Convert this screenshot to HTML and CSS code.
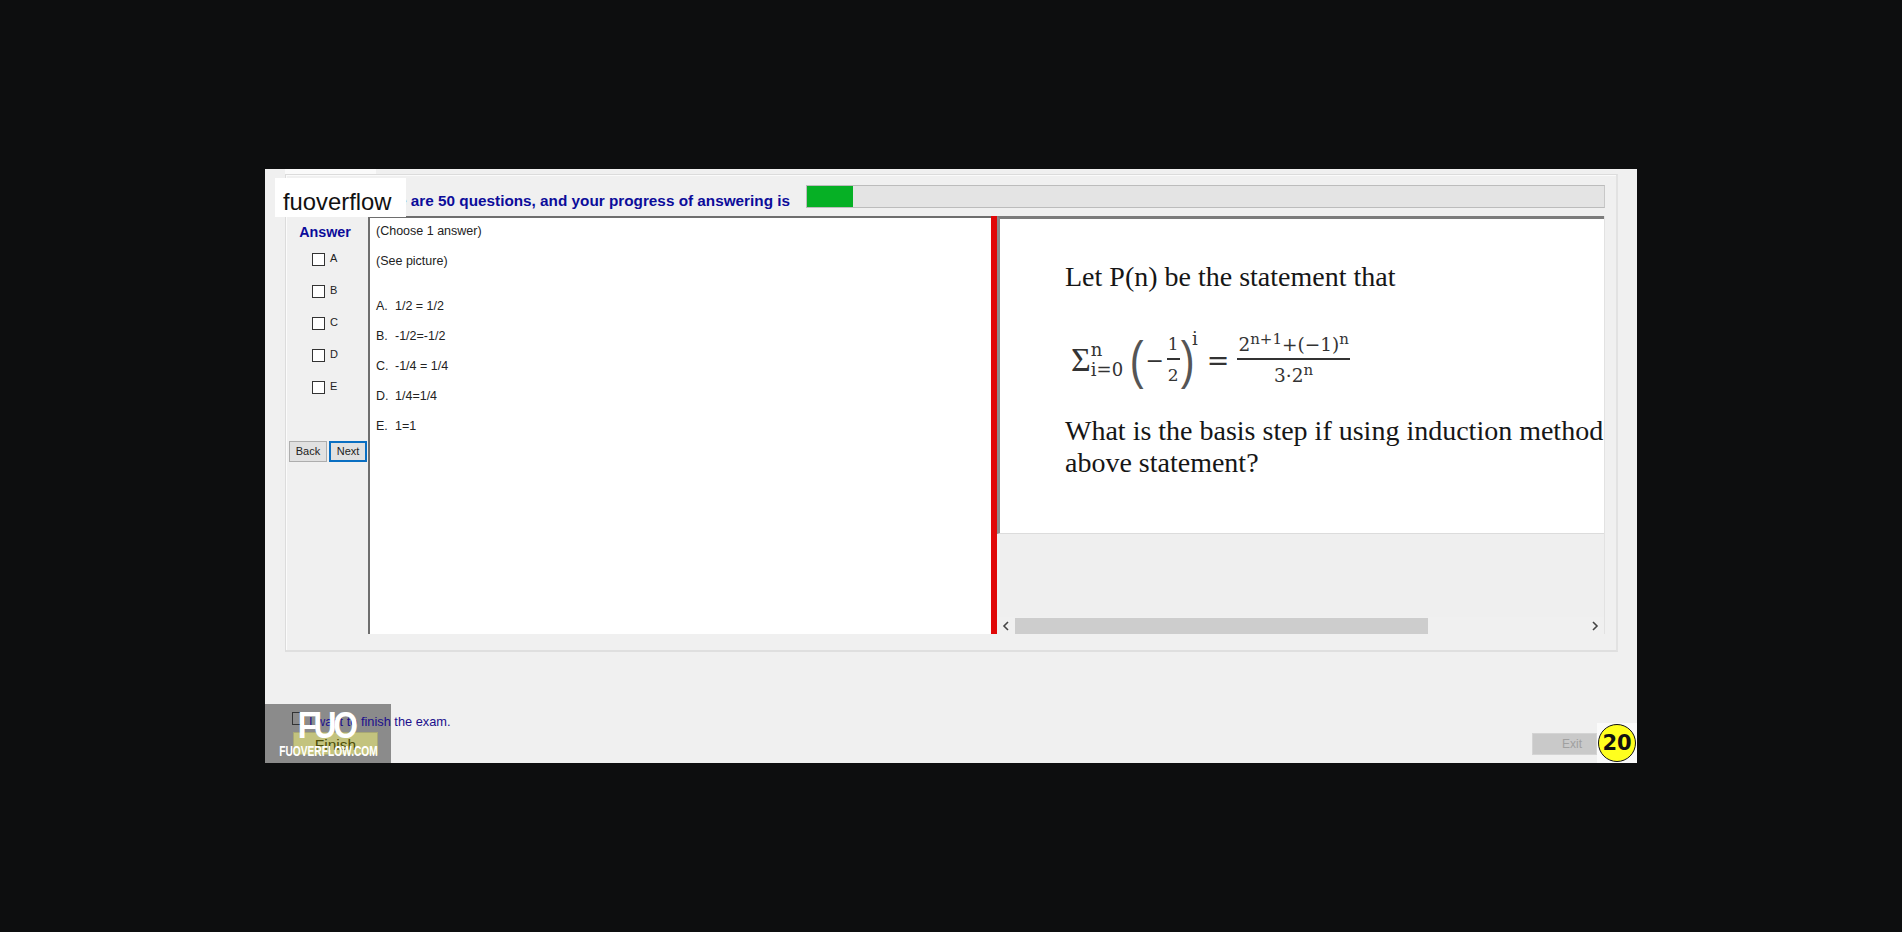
FILE: index.html
```html
<!DOCTYPE html>
<html lang="en">
<head>
<meta charset="utf-8">
<title>Exam</title>
<link rel="stylesheet" href="styles.css">
</head>
<body>
<div class="window">
  <div class="tabstrip"><div class="tab"></div></div>
  <div class="group">
    <div class="progress-row">
      <span class="progress-text">There are 50 questions, and your progress of answering is</span>
      <div class="progress"><div class="progress-fill"></div></div>
    </div>
    <div class="main">
      <aside class="answers">
        <div class="answers-title">Answer</div>
        <label class="opt"><span class="box"></span><span>A</span></label>
        <label class="opt"><span class="box"></span><span>B</span></label>
        <label class="opt"><span class="box"></span><span>C</span></label>
        <label class="opt"><span class="box"></span><span>D</span></label>
        <label class="opt"><span class="box"></span><span>E</span></label>
        <div class="nav">
          <span class="btn">Back</span>
          <span class="btn btn-focus">Next</span>
        </div>
      </aside>
      <section class="question">
        <p class="q-line">(Choose 1 answer)</p>
        <p class="q-line">(See picture)</p>
        <p class="q-line q-gap"><span class="q-let">A.</span>1/2 = 1/2</p>
        <p class="q-line"><span class="q-let">B.</span>-1/2=-1/2</p>
        <p class="q-line"><span class="q-let">C.</span>-1/4 = 1/4</p>
        <p class="q-line"><span class="q-let">D.</span>1/4=1/4</p>
        <p class="q-line"><span class="q-let">E.</span>1=1</p>
      </section>
      <div class="splitter"></div>
      <section class="viewer">
        <div class="viewport">
          <div class="picture">
            <p class="pic-line">Let P(n) be the statement that</p>
            <div class="eq">
              <span class="sigma">Σ</span>
              <span class="limits"><span>n</span><span>i=0</span></span>
              <span class="paren">(</span>
              <span class="minus">−</span>
              <span class="frac small"><span class="num">1</span><span class="den">2</span></span>
              <span class="paren paren-close">)</span>
              <span class="exp">i</span>
              <span class="equals">=</span>
              <span class="frac"><span class="num">2<sup>n+1</sup>+(−1)<sup>n</sup></span><span class="den">3·2<sup>n</sup></span></span>
            </div>
            <p class="pic-para">What is the basis step if using induction method to prove the above statement?</p>
          </div>
        </div>
        <div class="scrollbar">
          <span class="arrow"><svg class="chev" viewBox="0 0 8 10"><polyline points="6,1 2,5 6,9"/></svg></span>
          <div class="track"><div class="thumb"></div></div>
          <span class="arrow"><svg class="chev" viewBox="0 0 8 10"><polyline points="2,1 6,5 2,9"/></svg></span>
        </div>
      </section>
    </div>
  </div>
  <div class="footer">
    <div class="finish-col">
      <label class="finish-check"><span class="box"></span><span class="finish-label">I want to finish the exam.</span></label>
      <span class="finish-btn">Finish</span>
    </div>
    <span class="exit-btn">Exit</span>
  </div>
  <div class="wm-label">fuoverflow</div>
  <div class="wm-back"></div>
  <div class="wm-logo"><span class="wm-fuo">FUO</span><span class="wm-site">FUOVERFLOW.COM</span></div>
  <div class="timer"><span class="timer-dot">20</span></div>
</div>
</body>
</html>
```
FILE: styles.css
```css
html, body { margin: 0; height: 100%; background: #0d0e0f; overflow: hidden; }
body { display: flex; justify-content: flex-start; font-family: "Liberation Sans", Arial, sans-serif; }
p { margin: 0; }
.window { position: relative; width: 1372px; height: 594px; margin: 169px 0 0 265px; background: #f0f0f0; display: flex; flex-direction: column; }
.tabstrip { height: 5px; padding-left: 20px; }
.tab { width: 91px; height: 5px; background: #fafafa; }
.group { width: 1333px; height: 478px; margin-left: 20px; box-sizing: border-box; border: 1px solid #dcdcdc; border-bottom: 2px solid #dfdfdf; border-right: 2px solid #e2e2e2; box-shadow: inset 1px 1px 0 #fbfbfb; padding: 10px 0 0; }
.progress-row { display: flex; align-items: center; height: 23px; margin-bottom: 8px; padding-left: 52px; position: relative; }
.progress-text { width: 470px; padding-top: 8px; white-space: nowrap; font-size: 15.3px; font-weight: 700; color: #0c0c9a; display: flex; justify-content: flex-end; padding-right: 16px; box-sizing: border-box; margin-left: -2px; }
.progress { width: 799px; height: 23px; box-sizing: border-box; background: #e4e4e4; border: 1px solid #bcbcbc; border-right-color: #c8c8c8; }
.progress-fill { width: 46px; height: 100%; background: #06b025; }
.main { display: flex; height: 418px; }
.answers { width: 82px; flex: none; padding-top: 8px; font-size: 11px; color: #222; box-sizing: border-box; }
.answers-title { font-size: 14.3px; font-weight: 700; color: #0c0c9a; text-align: center; padding-right: 4px; height: 25px; }
.opt { display: flex; gap: 5px; height: 32px; align-items: flex-start; padding-left: 26px; line-height: 12px; }
.opt .box { margin-top: 4px; }
.opt span:last-child { margin-top: 3px; }
.box { width: 13px; height: 13px; box-sizing: border-box; flex: none; border: 1px solid #333; background: #fff; }
.nav { display: flex; gap: 2px; padding: 32px 0 0 3px; }
.btn { width: 38px; height: 21px; box-sizing: border-box; border: 1px solid #adadad; background: #e1e1e1; text-align: center; font-size: 11px; line-height: 19px; color: #222; }
.btn-focus { border: 2px solid #0a6fc2; line-height: 17px; }
.question { width: 623px; flex: none; box-sizing: border-box; background: #fff; border-left: 2px solid #6e6e6e; border-top: 2px solid #6e6e6e; padding: 6px 0 0 6px; font-size: 12.5px; color: #222; }
.q-line { height: 30px; line-height: 14px; }
.q-gap { margin-top: 15px; }
.q-let { display: inline-block; width: 19px; }
.splitter { width: 6px; flex: none; background: #e00808; }
.viewer { width: 607px; flex: none; display: flex; flex-direction: column; box-shadow: 1px 0 0 #e2e2e2; }
.viewport { height: 401px; overflow: hidden; background: #efefef; }
.picture { height: 318px; overflow: hidden; background: #fff; box-sizing: border-box; border-left: 3px solid #8c8c8c; border-top: 3px solid #7c7c7c; border-bottom: 1px solid #dcdcdc; padding: 0 0 0 65px; font-family: "Liberation Serif", "Times New Roman", serif; font-size: 28px; color: #161616; white-space: nowrap; }
.pic-line { line-height: 32px; padding-top: 42px; }
.pic-para { line-height: 32px; width: 730px; white-space: normal; margin-top: 23px; }
.eq { display: flex; align-items: center; height: 64px; margin-top: 35px; padding-left: 6px; color: #333; font-family: "DejaVu Serif", serif; }
.sigma { font-family: "Liberation Serif", serif; font-size: 34px; }
.limits { display: flex; flex-direction: column; font-size: 18px; line-height: 20px; }
.paren { font-family: "Liberation Sans", sans-serif; font-size: 52px; font-weight: 400; line-height: 56px; margin-left: 5px; transform: scaleX(.8); color: #555; }
.paren-close { margin-left: -1px; }
.minus { font-size: 22px; margin-right: 3px; }
.frac { display: inline-flex; flex-direction: column; align-items: center; font-size: 18.5px; line-height: 27px; margin-left: 8px; }
.frac.small { margin-left: 0; font-size: 17px; }
.num { border-bottom: 2px solid #333; padding: 0 1px; }
.den { padding-top: 2px; }
.frac sup { font-size: 15px; line-height: 0; }
.exp { font-size: 18px; line-height: 22px; align-self: flex-start; margin-left: -4px; }
.equals { font-size: 27px; margin-left: 9px; }
.scrollbar { display: flex; height: 17px; align-items: center; background: #f0f0f0; }
.arrow { width: 18px; height: 16px; display: flex; align-items: center; justify-content: center; }
.chev { width: 8px; height: 10px; fill: none; stroke: #444; stroke-width: 1.6; }
.track { flex: 1; height: 16px; }
.thumb { width: 413px; height: 16px; background: #cdcdcd; }
.footer { flex: 1; position: relative; z-index: 1; display: flex; justify-content: space-between; align-items: flex-end; padding: 0 40px 8px 27px; }
.finish-col { display: flex; flex-direction: column; gap: 3px; }
.finish-check { display: flex; gap: 4px; align-items: flex-start; font-size: 12.8px; color: #1c0f8c; white-space: nowrap; }
.finish-check .box { background: transparent; }
.finish-label { padding-top: 2px; }
.finish-btn { width: 85px; height: 23px; margin-left: 1px; box-sizing: border-box; background: #c3c37e; border: 1px solid #a8a874; color: #4e4e08; font-size: 15.5px; text-align: center; line-height: 24px; overflow: hidden; }
.exit-btn { width: 65px; height: 22px; box-sizing: border-box; background: #c9c9c9; border: 1px solid #d4d4d4; color: #a0a0a0; font-size: 12px; text-align: right; line-height: 20px; padding-right: 14px; }
.wm-label { position: absolute; z-index: 2; left: 10px; top: 9px; width: 131px; height: 39px; background: #fff; color: #111; font-size: 23.8px; line-height: 47px; padding-left: 8px; box-sizing: border-box; overflow: hidden; }
.wm-back { position: absolute; left: 0; bottom: 0; width: 126px; height: 59px; background: #8b8b8b; }
.wm-logo { position: absolute; z-index: 2; left: 0; bottom: 0; width: 126px; height: 59px; color: #fff; display: flex; flex-direction: column; align-items: center; font-weight: 700; }
.wm-fuo { font-size: 37px; line-height: 32px; letter-spacing: -4px; margin-top: 6px; margin-right: 3px; transform: scaleX(.86); }
.wm-site { font-size: 15px; line-height: 17px; white-space: nowrap; transform: scaleX(.68); }
.timer { position: absolute; z-index: 2; right: 0; bottom: 0; width: 40px; height: 40px; background: #fafafa; display: flex; align-items: center; justify-content: center; }
.timer-dot { width: 38px; height: 38px; box-sizing: border-box; border-radius: 50%; border: 1px solid #111; background: #ffff1e; color: #111; font-family: "DejaVu Sans", sans-serif; font-size: 21px; font-weight: 700; text-align: center; line-height: 36px; white-space: nowrap; }
```
